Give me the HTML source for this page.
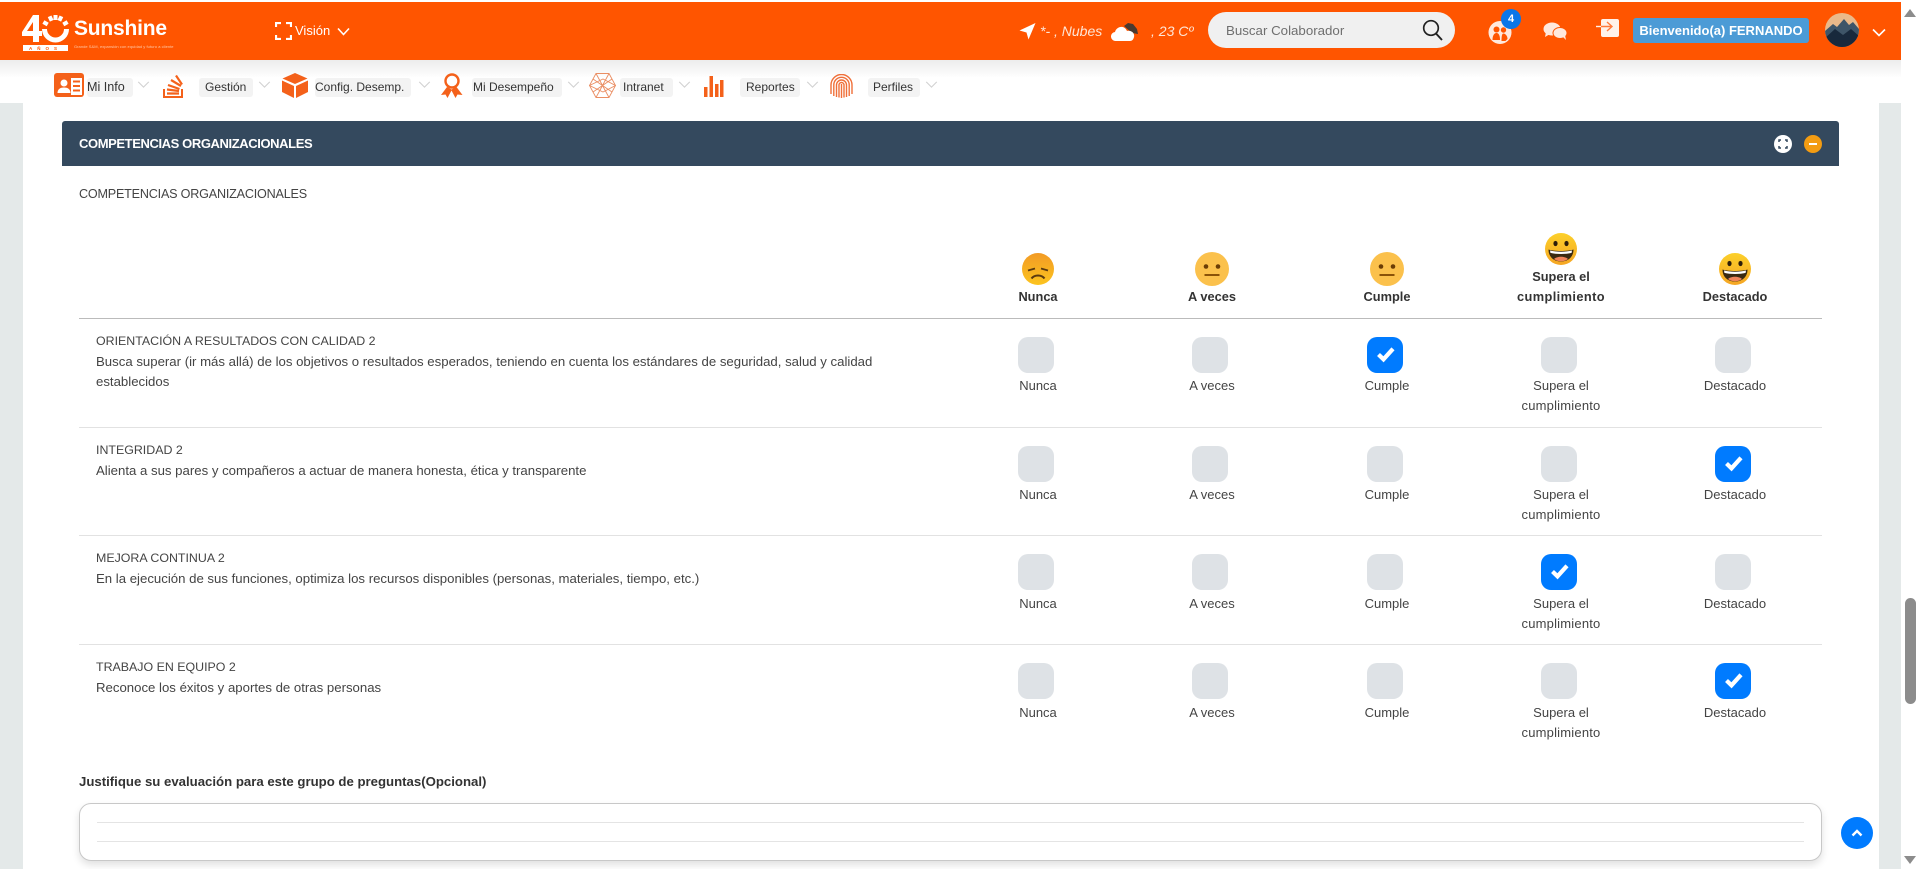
<!DOCTYPE html>
<html lang="es">
<head>
<meta charset="utf-8">
<title>Sunshine</title>
<style>
html,body{margin:0;padding:0;width:1919px;height:869px;overflow:hidden;background:#fff;font-family:"Liberation Sans",Arial,sans-serif;color:#333}
.a{position:absolute}
.t{position:absolute;white-space:nowrap;line-height:20px}
.c{position:absolute;white-space:nowrap;line-height:20px;text-align:center;width:174px;font-size:13px;color:#444}
.c2{letter-spacing:.2px}
.h{position:absolute;white-space:nowrap;line-height:20px;text-align:center;width:174px;font-size:12.8px;font-weight:bold;color:#333}
.b{position:absolute;width:36px;height:36px;border-radius:10px;background:#dee2e6}
.k{background:#007bff}
.k svg{display:block}
.chip{position:absolute;top:78px;height:19px;line-height:19px;background:#f3f3f3;border-radius:3px;font-size:12px;color:#333;text-align:left;white-space:nowrap}
.sep{position:absolute;left:79px;width:1743px;height:1px;background:#e2e2e2}
.d{font-size:13.2px;color:#444}
.n{font-size:12.4px;color:#444}
</style>
</head>
<body>
<svg width="0" height="0" style="position:absolute">
<defs>
<symbol id="chk" viewBox="0 0 36 36"><path d="M11.500 17.500l5 4.800 9.500-10.500" fill="none" stroke="#fff" stroke-width="4.200"/></symbol>
<symbol id="chev" viewBox="0 0 14 8"><path d="M1 1l6 6 6-6" fill="none" stroke="#d2d2d2" stroke-width="1.300"/></symbol>
<linearGradient id="gs" x1="0" y1="0" x2="0" y2="1"><stop offset="0" stop-color="#f29a25"/><stop offset="1" stop-color="#fcc41f"/></linearGradient>
<linearGradient id="gg" x1="0" y1="0" x2="0" y2="1"><stop offset="0" stop-color="#fcd02a"/><stop offset="1" stop-color="#f5a623"/></linearGradient>
<symbol id="neu" viewBox="0 0 34 34"><circle cx="17" cy="17" r="17" fill="#fbc14c"/><circle cx="11" cy="14.500" r="2.300" fill="#6b3d05"/><circle cx="23" cy="14.500" r="2.300" fill="#6b3d05"/><rect x="9.500" y="22" width="15" height="2" fill="#8a5208"/></symbol>
<symbol id="sad" viewBox="0 0 34 34"><circle cx="17" cy="17" r="16" fill="url(#gs)"/><path d="M7 18.500l7-2M27 18.500l-7-2" stroke="#5b3a10" stroke-width="1.800" fill="none"/><path d="M10.500 26.500c3-4 10-4 13 0" stroke="#5b3a10" stroke-width="2" fill="none"/></symbol>
<symbol id="gri" viewBox="0 0 34 34"><circle cx="17" cy="17" r="16" fill="url(#gg)"/><ellipse cx="11.500" cy="11.500" rx="2.100" ry="2.600" fill="#2b1d0a"/><ellipse cx="22.500" cy="11.500" rx="2.100" ry="2.600" fill="#2b1d0a"/><path d="M4.500 17.500c6 2 19 2 25 0 0 8-6 12-12.500 12S4.500 25.500 4.500 17.500z" fill="#3a2a12"/><path d="M6 18.500c6 1.600 16 1.600 22 0l-.4 2.400c-6 1.500-15 1.500-21.200 0z" fill="#fff"/><path d="M10 27c3-3 11-3 14 0-4 3-10 3-14 0z" fill="#f0845a"/></symbol>
</defs>
</svg>

<!-- top bar -->
<div class="a" style="left:0;top:2px;width:1901px;height:58px;background:#ff5500"></div>
<div class="a" style="left:0;top:60px;width:1901px;height:18px;background:linear-gradient(#ececec,#fff)"></div>

<!-- logo -->
<svg class="a" style="left:20px;top:12px" width="62" height="42" viewBox="0 0 62 42">
<path d="M13 3h6v16h3v5h-3v6h-6v-6H2v-4zM13 10l-6 9h6z" fill="#fff" fill-rule="evenodd"/>
<path d="M24.500 17a11 11 0 0 0 22 0" fill="none" stroke="#fff" stroke-width="5"/>
<path d="M27.700 12.500L23.400 10M31.700 8.800L29.600 4.300M35.500 8V3M39.300 8.800L41.400 4.300M43.300 12.500L47.600 10" fill="none" stroke="#fff" stroke-width="4"/>
<rect x="3" y="33" width="45" height="6" fill="#fff"/>
<text x="25.500" y="37.800" font-size="4.500" text-anchor="middle" fill="#ff5500" font-family="Liberation Sans" letter-spacing="5" font-weight="bold">AÑOS</text>
</svg>
<div class="t" style="left:74px;top:16px;font-size:21px;line-height:26px;font-weight:bold;color:#fff;letter-spacing:-.2px">Sunshine</div>
<div class="t" style="left:74px;top:43px;font-size:4px;line-height:8px;color:#ffc9a8;letter-spacing:.05px">Grande S&amp;M, expansión con equidad y futuro a cliente</div>

<!-- vision -->
<svg class="a" style="left:275px;top:22px" width="17" height="18" viewBox="0 0 17 18"><path d="M1 5V1h5M11 1h5v4M16 13v4h-5M6 17H1v-4" fill="none" stroke="#fff" stroke-width="2.200"/></svg>
<div class="t" style="left:295px;top:21px;font-size:13px;color:#fff">Visión</div>
<svg class="a" style="left:337px;top:27px" width="13" height="9" viewBox="0 0 13 9"><path d="M1 1.500l5.500 6 5.500-6" fill="none" stroke="#fff" stroke-width="1.600"/></svg>

<!-- weather -->
<svg class="a" style="left:1019px;top:22px" width="17" height="18" viewBox="0 0 17 18"><path d="M16.500 1L9.500 17.500 7.500 10.500 .5 8.500z" fill="#fff"/></svg>
<div class="t" style="left:1040px;top:21px;font-size:14px;font-style:italic;color:#ffe6d6">*- , Nubes</div>
<svg class="a" style="left:1111px;top:22px" width="28" height="20" viewBox="0 0 28 20"><path d="M13 4l4-3 5 1 4 5 1 5-6-1z" fill="#4a3a30"/><path d="M5 19a4.500 4.500 0 0 1-1-9c1-5 9-8 12-1 4-1 8 2 7 6-.5 2.500-2 4-4 4z" fill="#fff"/></svg>
<div class="t" style="left:1151px;top:21px;font-size:14px;font-style:italic;color:#ffe6d6">, 23 Cº</div>

<!-- search -->
<div class="a" style="left:1208px;top:12px;width:247px;height:36px;border-radius:18px;background:#f0f0f0"></div>
<div class="t" style="left:1226px;top:21px;font-size:13.300px;color:#6f6f6f">Buscar Colaborador</div>
<svg class="a" style="left:1422px;top:19px" width="21" height="22" viewBox="0 0 21 22"><circle cx="9" cy="9" r="7.300" fill="none" stroke="#222" stroke-width="1.700"/><path d="M14 14.500l6 6.500" stroke="#222" stroke-width="1.900"/></svg>

<!-- team -->
<svg class="a" style="left:1488px;top:20px" width="24" height="25" viewBox="0 0 24 25"><circle cx="12" cy="12.500" r="11.500" fill="#ffe9dd"/><circle cx="8.500" cy="9.500" r="3" fill="#ff5500"/><path d="M4.500 20c0-5 2-7 4-7s3.500 2 3.500 7z" fill="#ff5500"/><circle cx="15.500" cy="10" r="2.700" fill="#ff5500"/><path d="M13.500 21c0-5 .5-7.500 2-7.500s4 2 4 5.500l-2 2z" fill="#ff5500"/></svg>
<div class="a" style="left:1501px;top:9px;width:20px;height:20px;border-radius:50%;background:#0a76e8;color:#fff;font-size:11px;font-weight:bold;text-align:center;line-height:20px">4</div>

<!-- chat -->
<svg class="a" style="left:1543px;top:22px" width="25" height="18" viewBox="0 0 25 18"><ellipse cx="9" cy="7" rx="8.500" ry="6.500" fill="#ffe9dd"/><path d="M3 10l-1 5 5-3z" fill="#ffe9dd"/><ellipse cx="17" cy="11" rx="7" ry="5.500" fill="#ffe9dd" stroke="#ff5500" stroke-width="1"/><path d="M20 15l3 3-1-5z" fill="#ffe9dd"/></svg>

<!-- exit -->
<svg class="a" style="left:1596px;top:18px" width="24" height="20" viewBox="0 0 24 20"><rect x="5" y="1" width="18" height="18" rx="2" fill="#fff2ea"/><path d="M5 8.500h10M11 4l5 4.500-5 4.500" fill="none" stroke="#ff7a3c" stroke-width="1.400"/><path d="M0 8.500h5" stroke="#fff2ea" stroke-width="1.400"/></svg>

<!-- welcome -->
<div class="a" style="left:1633px;top:18px;width:176px;height:25px;border-radius:3px;background:#4c9bd6;color:#fff;font-size:13px;font-weight:bold;line-height:25px;text-align:center;white-space:nowrap">Bienvenido(a) FERNANDO</div>

<!-- avatar -->
<svg class="a" style="left:1825px;top:13px" width="34" height="34" viewBox="0 0 34 34"><defs><clipPath id="av"><circle cx="17" cy="17" r="17"/></clipPath></defs><g clip-path="url(#av)"><rect width="34" height="34" fill="#eab98a"/><path d="M0 18l8-7 4 3 7-8 5 6 4-3 6 7v18H0z" fill="#3e5568"/><path d="M0 25l10-9 8 6 8-6 8 7v11H0z" fill="#18293c"/></g></svg>
<svg class="a" style="left:1872px;top:28px" width="14" height="9" viewBox="0 0 14 9"><path d="M1 1.500l6 6 6-6" fill="none" stroke="#fff" stroke-width="1.600"/></svg>

<!-- menu -->
<svg class="a" style="left:54px;top:73px" width="30" height="24" viewBox="0 0 30 24"><rect width="30" height="24" rx="3" fill="#f4611a"/><rect x="17" y="5" width="11" height="17" fill="#fff"/><circle cx="10" cy="10" r="3.500" fill="#fff"/><path d="M3.500 20c0-4 3-5.500 6.500-5.500s6.500 1.500 6.500 5.500z" fill="#fff"/><path d="M19 8.500h7M19 13h7M19 17.500h7" stroke="#f4611a" stroke-width="2"/></svg>
<div class="chip" style="left:87px;width:46px;font-size:12.600px">Mi Info</div>
<svg class="a" style="left:137px;top:81px" width="13" height="7"><use href="#chev"/></svg>

<svg class="a" style="left:163px;top:73px" width="21" height="25" viewBox="0 0 21 25"><path d="M1 16v8h18v-8" fill="none" stroke="#f4611a" stroke-width="2"/><path d="M4 20.500h12M4 16.500l12 1.500M5 12l11.500 4M8 7l10 6M13 2.500l6 9" fill="none" stroke="#f4611a" stroke-width="2.200"/></svg>
<div class="chip" style="left:199px;width:48px;padding-left:6px">Gestión</div>
<svg class="a" style="left:258px;top:81px" width="13" height="7"><use href="#chev"/></svg>

<svg class="a" style="left:282px;top:73px" width="26" height="25" viewBox="0 0 26 25"><path d="M13 0l12.500 5.500L13 11 .5 5.500z" fill="#f4611a"/><path d="M0 7.500l12 5.500v12l-12-6zM26 7.500l-12 5.500v12l12-6z" fill="#f4611a"/></svg>
<div class="chip" style="left:315px;width:96px">Config. Desemp.</div>
<svg class="a" style="left:418px;top:81px" width="13" height="7"><use href="#chev"/></svg>

<svg class="a" style="left:441px;top:73px" width="22" height="25" viewBox="0 0 22 25"><circle cx="11" cy="8" r="6.500" fill="none" stroke="#f4611a" stroke-width="2.400"/><path d="M6 14L0 22l4.500-.500 2 3.500 4-7.500 4 7.500 2-3.500 5 .500-6-8-5 2.500z" fill="#f4611a"/></svg>
<div class="chip" style="left:472px;width:89px;padding-left:1px">Mi Desempeño</div>
<svg class="a" style="left:567px;top:81px" width="13" height="7"><use href="#chev"/></svg>

<svg class="a" style="left:589px;top:73px" width="27" height="25" viewBox="0 0 27 25"><g fill="none" stroke="#ea8e63" stroke-width=".9"><path d="M7 .5h13l6.500 12L20 24.500H7L.5 12.500z"/><path d="M7 .5L20 24.500M20 .5L7 24.500M.5 12.500L14 6l12.500 6.500L14 19zM4 6l19 13M23 6L4 19"/></g></svg>
<div class="chip" style="left:620px;width:50px;padding-left:3px">Intranet</div>
<svg class="a" style="left:678px;top:81px" width="13" height="7"><use href="#chev"/></svg>

<svg class="a" style="left:704px;top:76px" width="20" height="21" viewBox="0 0 20 21"><g fill="#f4611a"><rect x="0" y="11" width="3.500" height="10"/><rect x="5.500" y="0" width="3.500" height="21"/><rect x="11" y="8" width="3.500" height="13"/><rect x="16" y="4" width="3.500" height="17"/></g></svg>
<div class="chip" style="left:740px;width:54px;padding-left:6px">Reportes</div>
<svg class="a" style="left:806px;top:81px" width="13" height="7"><use href="#chev"/></svg>

<svg class="a" style="left:830px;top:74px" width="23" height="24" viewBox="0 0 23 24"><g fill="none" stroke="#f0703a" stroke-width="1.400"><path d="M1 20V11a10.500 10.500 0 0 1 21 0v9"/><path d="M3.800 22V11a7.700 7.700 0 0 1 15.400 0v11"/><path d="M6.500 23V11a5 5 0 0 1 10 0v12"/><path d="M9 23.500V11a2.500 2.500 0 0 1 5 0v12.500"/><path d="M11.500 10v14"/></g></svg>
<div class="chip" style="left:868px;width:47px;padding-left:5px">Perfiles</div>
<svg class="a" style="left:925px;top:81px" width="13" height="7"><use href="#chev"/></svg>

<!-- side strips -->
<div class="a" style="left:0;top:103px;width:23px;height:766px;background:#e4e9e9"></div>
<div class="a" style="left:1879px;top:103px;width:22px;height:766px;background:#e4e9e9"></div>

<!-- panel header -->
<div class="a" style="left:62px;top:121px;width:1777px;height:45px;background:#34495e;border-radius:3px 3px 0 0"></div>
<div class="t" style="left:79px;top:134px;font-size:13px;font-weight:bold;color:#fff;letter-spacing:-.4px">COMPETENCIAS ORGANIZACIONALES</div>
<svg class="a" style="left:1774px;top:135px" width="18" height="18" viewBox="0 0 18 18"><circle cx="9" cy="9" r="9" fill="#fff"/><path d="M5 7V5h2M11 5h2v2M13 11v2h-2M7 13H5v-2" fill="none" stroke="#34495e" stroke-width="1.500"/></svg>
<svg class="a" style="left:1804px;top:135px" width="18" height="18" viewBox="0 0 18 18"><circle cx="9" cy="9" r="9" fill="#f39c12"/><rect x="5" y="8" width="8" height="2" fill="#fff"/></svg>

<div class="t" style="left:79px;top:184px;font-size:12.600px;color:#444;letter-spacing:-.2px">COMPETENCIAS ORGANIZACIONALES</div>

<!-- column heads -->
<svg class="a" style="left:1021px;top:252px" width="34" height="34"><use href="#sad"/></svg>
<svg class="a" style="left:1195px;top:252px" width="34" height="34"><use href="#neu"/></svg>
<svg class="a" style="left:1370px;top:252px" width="34" height="34"><use href="#neu"/></svg>
<svg class="a" style="left:1544px;top:232px" width="34" height="34"><use href="#gri"/></svg>
<svg class="a" style="left:1718px;top:252px" width="34" height="34"><use href="#gri"/></svg>
<div class="h" style="left:951px;top:287px">Nunca</div>
<div class="h" style="left:1125px;top:287px">A veces</div>
<div class="h" style="left:1300px;top:287px">Cumple</div>
<div class="h" style="left:1474px;top:267px">Supera el<br><span style="letter-spacing:.4px">cumplimiento</span></div>
<div class="h" style="left:1648px;top:287px">Destacado</div>
<div class="a" style="left:79px;top:318px;width:1743px;height:1px;background:#bbb"></div>

<!-- row 1 -->
<div class="t n" style="left:96px;top:331px">ORIENTACIÓN A RESULTADOS CON CALIDAD 2</div>
<div class="t d" style="left:96px;top:352px">Busca superar (ir más allá) de los objetivos o resultados esperados, teniendo en cuenta los estándares de seguridad, salud y calidad</div>
<div class="t d" style="left:96px;top:372px">establecidos</div>
<div class="b" style="left:1018px;top:337px"></div>
<div class="b" style="left:1192px;top:337px"></div>
<div class="b k" style="left:1367px;top:337px"><svg width="36" height="36"><use href="#chk"/></svg></div>
<div class="b" style="left:1541px;top:337px"></div>
<div class="b" style="left:1715px;top:337px"></div>
<div class="c" style="left:951px;top:376px">Nunca</div>
<div class="c" style="left:1125px;top:376px">A veces</div>
<div class="c" style="left:1300px;top:376px">Cumple</div>
<div class="c" style="left:1474px;top:376px">Supera el<br><span class="c2">cumplimiento</span></div>
<div class="c" style="left:1648px;top:376px">Destacado</div>
<div class="sep" style="top:427px"></div>

<!-- row 2 -->
<div class="t n" style="left:96px;top:440px">INTEGRIDAD 2</div>
<div class="t d" style="left:96px;top:461px">Alienta a sus pares y compañeros a actuar de manera honesta, ética y transparente</div>
<div class="b" style="left:1018px;top:446px"></div>
<div class="b" style="left:1192px;top:446px"></div>
<div class="b" style="left:1367px;top:446px"></div>
<div class="b" style="left:1541px;top:446px"></div>
<div class="b k" style="left:1715px;top:446px"><svg width="36" height="36"><use href="#chk"/></svg></div>
<div class="c" style="left:951px;top:485px">Nunca</div>
<div class="c" style="left:1125px;top:485px">A veces</div>
<div class="c" style="left:1300px;top:485px">Cumple</div>
<div class="c" style="left:1474px;top:485px">Supera el<br><span class="c2">cumplimiento</span></div>
<div class="c" style="left:1648px;top:485px">Destacado</div>
<div class="sep" style="top:535px"></div>

<!-- row 3 -->
<div class="t n" style="left:96px;top:548px">MEJORA CONTINUA 2</div>
<div class="t d" style="left:96px;top:569px">En la ejecución de sus funciones, optimiza los recursos disponibles (personas, materiales, tiempo, etc.)</div>
<div class="b" style="left:1018px;top:554px"></div>
<div class="b" style="left:1192px;top:554px"></div>
<div class="b" style="left:1367px;top:554px"></div>
<div class="b k" style="left:1541px;top:554px"><svg width="36" height="36"><use href="#chk"/></svg></div>
<div class="b" style="left:1715px;top:554px"></div>
<div class="c" style="left:951px;top:594px">Nunca</div>
<div class="c" style="left:1125px;top:594px">A veces</div>
<div class="c" style="left:1300px;top:594px">Cumple</div>
<div class="c" style="left:1474px;top:594px">Supera el<br><span class="c2">cumplimiento</span></div>
<div class="c" style="left:1648px;top:594px">Destacado</div>
<div class="sep" style="top:644px"></div>

<!-- row 4 -->
<div class="t n" style="left:96px;top:657px">TRABAJO EN EQUIPO 2</div>
<div class="t d" style="left:96px;top:678px">Reconoce los éxitos y aportes de otras personas</div>
<div class="b" style="left:1018px;top:663px"></div>
<div class="b" style="left:1192px;top:663px"></div>
<div class="b" style="left:1367px;top:663px"></div>
<div class="b" style="left:1541px;top:663px"></div>
<div class="b k" style="left:1715px;top:663px"><svg width="36" height="36"><use href="#chk"/></svg></div>
<div class="c" style="left:951px;top:703px">Nunca</div>
<div class="c" style="left:1125px;top:703px">A veces</div>
<div class="c" style="left:1300px;top:703px">Cumple</div>
<div class="c" style="left:1474px;top:703px">Supera el<br><span class="c2">cumplimiento</span></div>
<div class="c" style="left:1648px;top:703px">Destacado</div>

<!-- justify -->
<div class="t" style="left:79px;top:772px;font-size:13.200px;font-weight:bold;color:#333">Justifique su evaluación para este grupo de preguntas(Opcional)</div>
<div class="a" style="left:79px;top:803px;width:1741px;height:56px;border:1px solid #c8c8c8;border-radius:12px;background:#fff;box-shadow:0 4px 8px rgba(0,0,0,.12)"></div>
<div class="a" style="left:97px;top:822px;width:1707px;height:1px;background:#e4e4e4"></div>
<div class="a" style="left:97px;top:841px;width:1707px;height:1px;background:#e4e4e4"></div>

<!-- to top -->
<div class="a" style="left:1841px;top:817px;width:32px;height:32px;border-radius:50%;background:#007bff"></div>
<svg class="a" style="left:1851px;top:829px" width="12" height="8" viewBox="0 0 12 8"><path d="M1.500 6.500L6 2l4.500 4.500" fill="none" stroke="#fff" stroke-width="2.400"/></svg>

<!-- scrollbar -->
<div class="a" style="left:1901px;top:0;width:18px;height:869px;background:#fff"></div>
<div class="a" style="left:1905px;top:598px;width:11px;height:106px;border-radius:6px;background:#8c8c8c"></div>
<svg class="a" style="left:1904px;top:9px" width="12" height="8"><path d="M6 0l6 8H0z" fill="#8c8c8c"/></svg>
<svg class="a" style="left:1904px;top:856px" width="12" height="8"><path d="M6 8L0 0h12z" fill="#8c8c8c"/></svg>
</body>
</html>
